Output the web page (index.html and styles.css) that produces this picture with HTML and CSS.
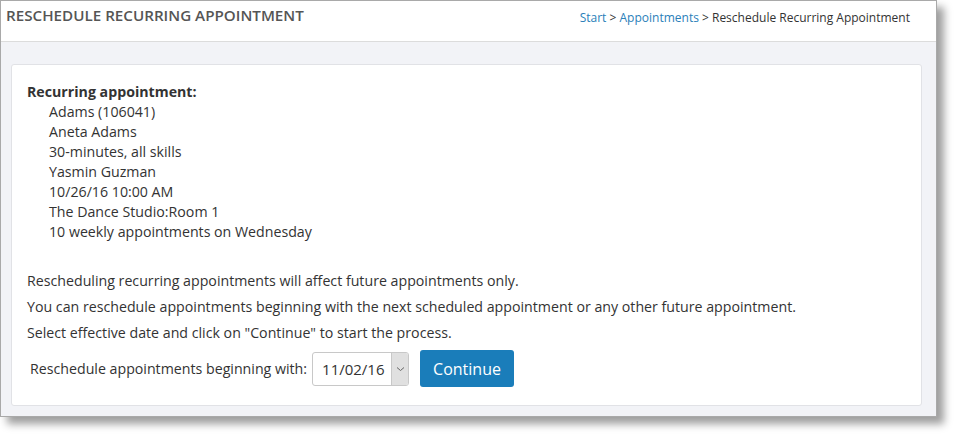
FILE: index.html
```html
<!DOCTYPE html>
<html lang="en">

<head>
    <meta charset="UTF-8">
    <title>Reschedule Recurring Appointment</title>
    <link rel="stylesheet" href="styles.css">
</head>

<body>
    <div class="window">
        <!-- Page header with title and breadcrumb -->
        <div class="header">
            <h1 class="title">Reschedule Recurring Appointment</h1>
            <div class="crumbs">
                <a href="#">Start</a> &gt; <a href="#">Appointments</a> &gt; Reschedule Recurring Appointment
            </div>
        </div>

        <div class="content">
            <div class="panel">
                <div class="appt">
                    <b>Recurring appointment:</b>
                    <div class="appt-lines">
                        <div>Adams (106041)</div>
                        <div>Aneta Adams</div>
                        <div>30-minutes, all skills</div>
                        <div>Yasmin Guzman</div>
                        <div>10/26/16 10:00 AM</div>
                        <div>The Dance Studio:Room 1</div>
                        <div>10 weekly appointments on Wednesday</div>
                    </div>
                </div>

                <p>Rescheduling recurring appointments will affect future appointments only.</p>
                <p>You can reschedule appointments beginning with the next scheduled appointment or any other future appointment.</p>
                <p>Select effective date and click on "Continue" to start the process.</p>

                <div class="form-row">
                    <label for="startDate">Reschedule appointments beginning with:</label>
                    <div class="select">
                        <span class="select-value" id="startDate">11/02/16</span>
                        <span class="select-arrow">
                            <svg width="9" height="6" viewBox="0 0 9 6"><path d="M1 1.5 L4.5 4.5 L8 1.5" fill="none" stroke="#666" stroke-width="1"/></svg>
                        </span>
                    </div>
                    <button class="btn">Continue</button>
                </div>
            </div>
        </div>
    </div>
</body>

</html>
```

FILE: styles.css
```css
html,
body {
    height: 100%;
}

body {
    margin: 0;
    background-color: #ffffff;
    font-family: "Open Sans", "Liberation Sans", sans-serif;
    font-size: 14.2px;
    color: #333;
}

.window {
    width: 935px;
    height: 415px;
    border: 1px solid #a9a9a9;
    background-color: #f2f3f7;
    box-shadow: 7px 7px 8px rgba(0, 0, 0, 0.38);
    display: flex;
    flex-direction: column;
}

.header {
    height: 40px;
    background-color: #fff;
    border-bottom: 1px solid #dcdcdc;
    display: flex;
    justify-content: space-between;
    align-items: flex-start;
}

.title {
    margin: 5px 0 0 5px;
    font-size: 15.2px;
    font-weight: 600;
    text-transform: uppercase;
    color: #555;
    line-height: 18px;
}

.crumbs {
    margin: 8px 26px 0 0;
    font-size: 12px;
    line-height: 18px;
    color: #333;
}

.crumbs a {
    color: #2a80b9;
    text-decoration: none;
}

.content {
    flex: 1;
    padding: 22px 14px 10px 10px;
    display: flex;
}

.panel {
    flex: 1;
    background-color: #fff;
    border: 1px solid #e1e2e6;
    border-radius: 3px;
    padding: 17px 15px 0 15px;
}

.appt {
    line-height: 20px;
    margin-bottom: 29px;
}

.appt b {
    font-weight: 700;
}

.appt-lines {
    padding-left: 22px;
}

p {
    margin: 0 0 6px;
    line-height: 20px;
}

.form-row {
    display: flex;
    align-items: center;
    margin-top: 7px;
    padding-left: 3px;
}

.form-row label {
    margin-right: 5px;
}

.select {
    display: flex;
    height: 32px;
    border: 1px solid #c8c8c8;
    border-radius: 3px;
    overflow: hidden;
    margin-right: 11px;
}

.select-value {
    padding: 0 9px;
    width: 60px;
    line-height: 32px;
    font-size: 15px;
    color: #333;
}

.select-arrow {
    width: 16px;
    background-color: #e0e0e0;
    border-left: 1px solid #c8c8c8;
    display: flex;
    align-items: center;
    justify-content: center;
}

.btn {
    height: 37px;
    padding: 0 13px;
    border: none;
    border-radius: 3px;
    background-color: #1a7dba;
    color: #fff;
    font-family: "Open Sans", "Liberation Sans", sans-serif;
    font-size: 16px;
}
```
